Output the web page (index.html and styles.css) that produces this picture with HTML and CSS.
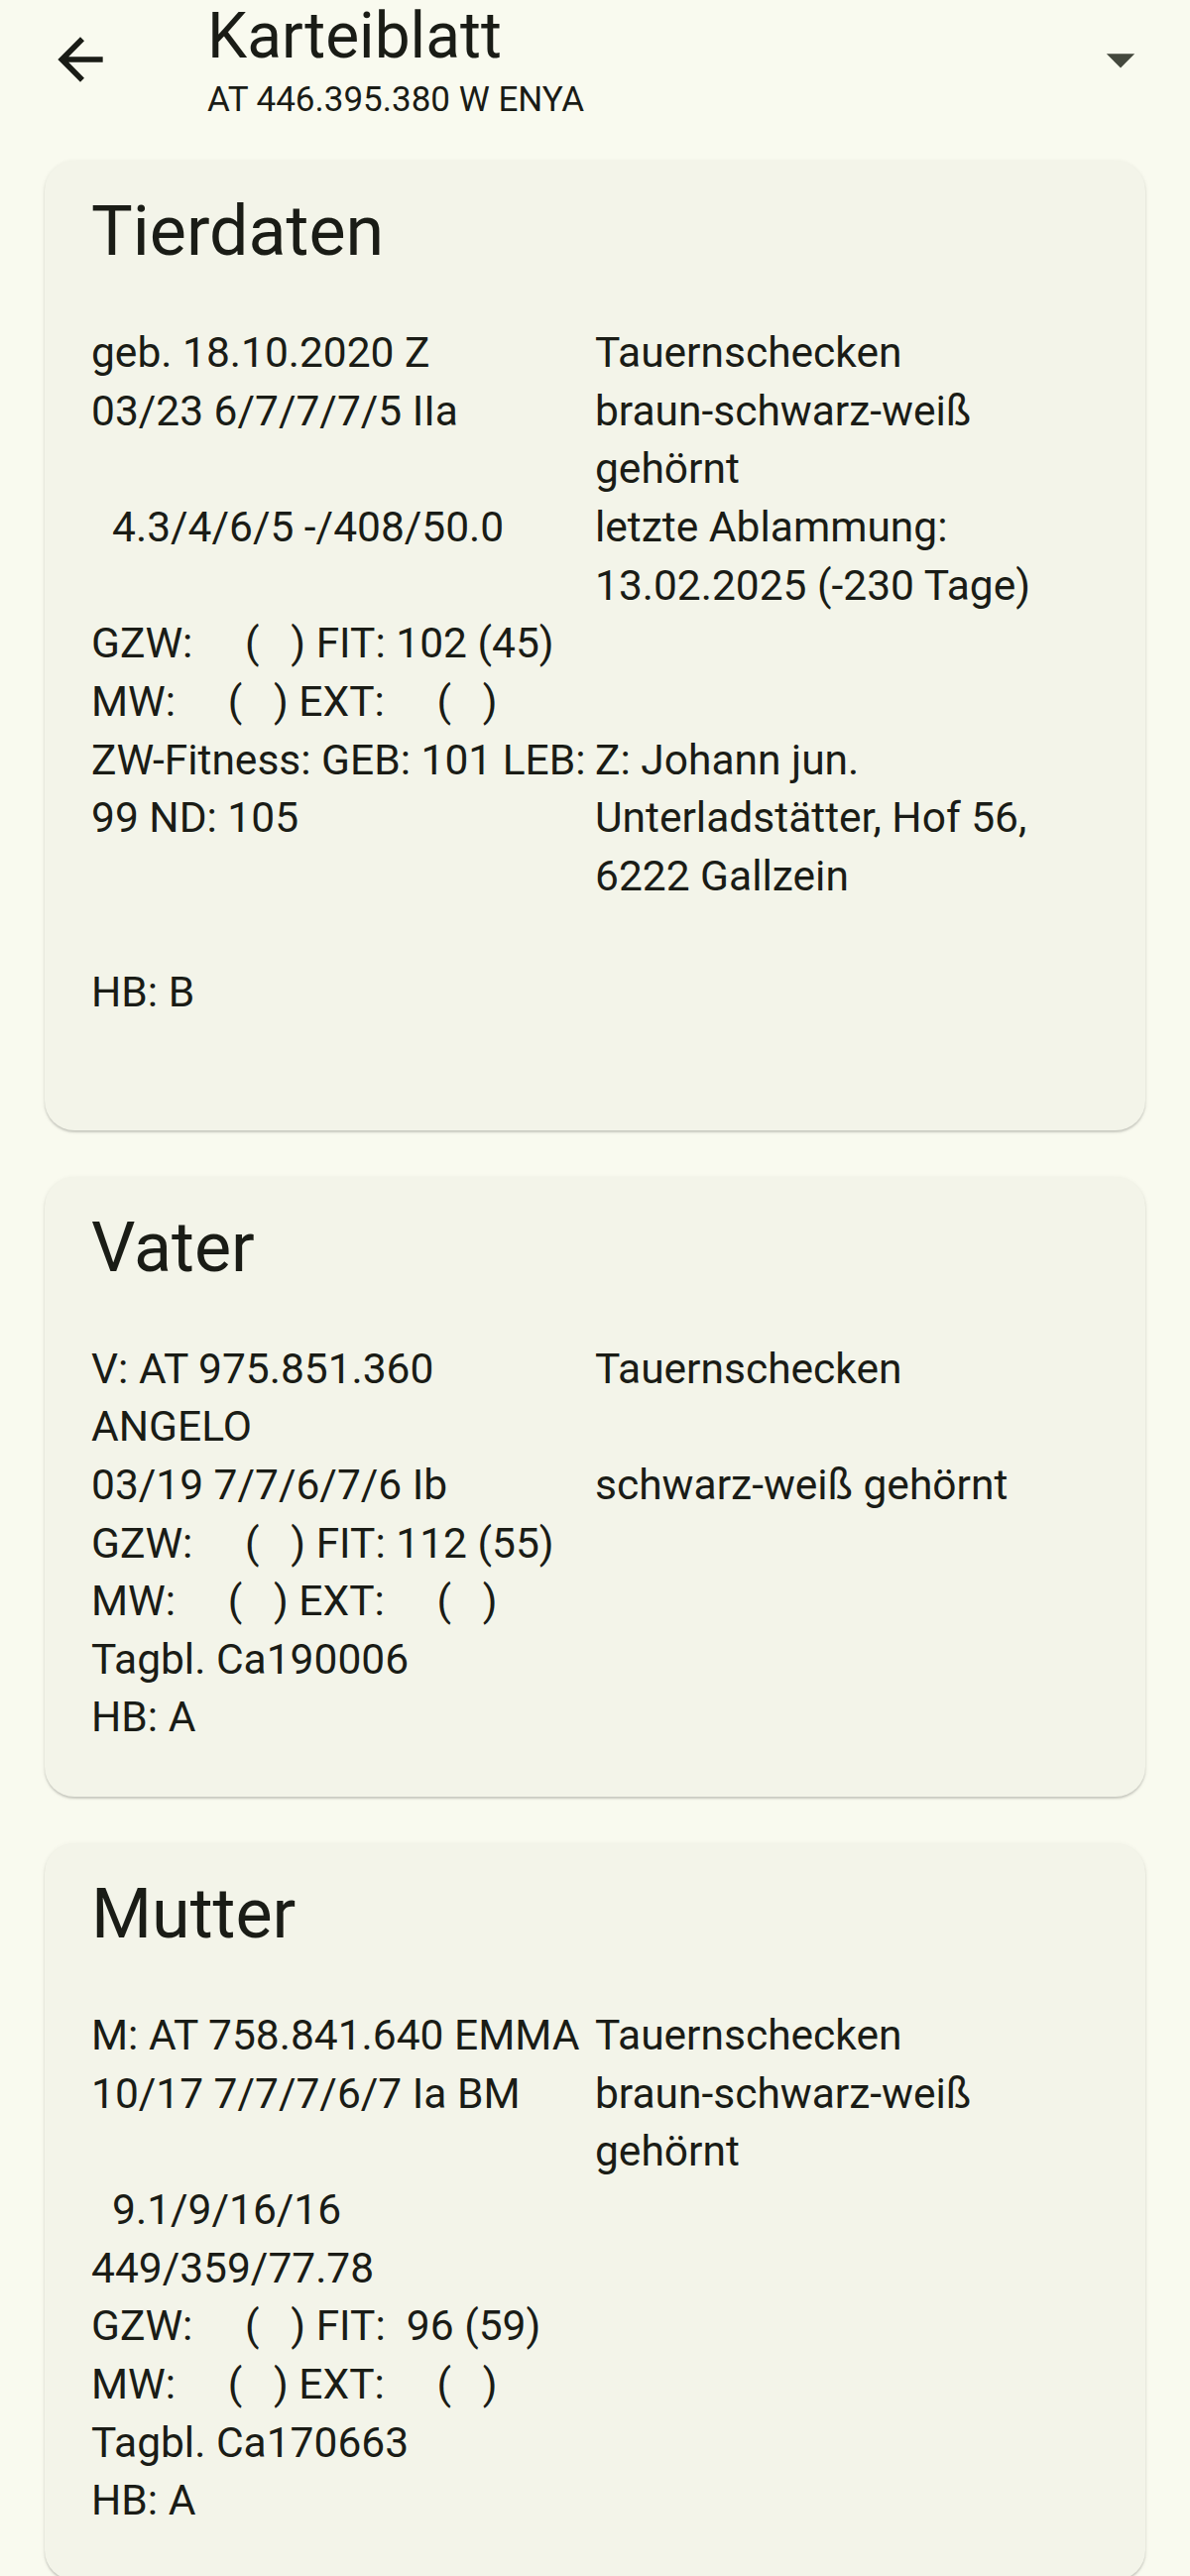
FILE: index.html
```html
<!DOCTYPE html>
<html lang="de">

<head>
    <meta charset="UTF-8">
    <meta name="viewport" content="width=device-width, initial-scale=1.0">
    <title>Karteiblatt</title>
    <link rel="stylesheet" href="styles.css">
</head>

<body>
    <header class="app-bar">
        <button class="icon-btn back" aria-label="Zurück">
            <svg viewBox="0 0 24 24"><path d="M20 11H7.83l5.59-5.59L12 4l-8 8 8 8 1.41-1.41L7.83 13H20v-2z"/></svg>
        </button>
        <div class="app-bar-title">
            <h1>Karteiblatt</h1>
            <p>AT 446.395.380 W ENYA</p>
        </div>
        <button class="icon-btn menu" aria-label="Menü">
            <svg viewBox="0 0 24 24"><path d="M7 10l5 5 5-5z"/></svg>
        </button>
    </header>

    <main class="content">
        <section class="card">
            <h2>Tierdaten</h2>
            <div class="info-grid">
                <div class="cell">geb. 18.10.2020 Z<br>03/23 6/7/7/7/5 IIa</div>
                <div class="cell">Tauernschecken<br>braun-schwarz-weiß<br>gehörnt</div>

                <div class="cell">  4.3/4/6/5 -/408/50.0</div>
                <div class="cell">letzte Ablammung:<br>13.02.2025 (-230 Tage)</div>

                <div class="cell">GZW:     (   ) FIT: 102 (45)<br>MW:     (   ) EXT:     (   )</div>
                <div class="cell"></div>

                <div class="cell">ZW-Fitness: GEB: 101 LEB:<br>99 ND: 105</div>
                <div class="cell">Z: Johann jun.<br>Unterladstätter, Hof 56,<br>6222 Gallzein</div>

                <div class="cell"> <br>HB: B<br> </div>
                <div class="cell"></div>
            </div>
        </section>

        <section class="card">
            <h2>Vater</h2>
            <div class="info-grid">
                <div class="cell">V: AT 975.851.360<br>ANGELO</div>
                <div class="cell">Tauernschecken</div>

                <div class="cell">03/19 7/7/6/7/6 Ib<br>GZW:     (   ) FIT: 112 (55)<br>MW:     (   ) EXT:     (   )<br>Tagbl. Ca190006<br>HB: A</div>
                <div class="cell">schwarz-weiß gehörnt</div>
            </div>
        </section>

        <section class="card">
            <h2>Mutter</h2>
            <div class="info-grid">
                <div class="cell">M: AT 758.841.640 EMMA</div>
                <div class="cell">Tauernschecken</div>

                <div class="cell">10/17 7/7/7/6/7 Ia BM</div>
                <div class="cell">braun-schwarz-weiß<br>gehörnt</div>

                <div class="cell">  9.1/9/16/16<br>449/359/77.78<br>GZW:     (   ) FIT:  96 (59)<br>MW:     (   ) EXT:     (   )<br>Tagbl. Ca170663<br>HB: A</div>
                <div class="cell"></div>
            </div>
        </section>
    </main>
</body>

</html>
```

FILE: styles.css
```css
body {
    margin: 0;
    background-color: #f9faef;
    color: #1a1c16;
    font-family: Roboto, "Liberation Sans", sans-serif;
}

/* top bar */
.app-bar {
    display: flex;
    align-items: flex-start;
    height: 128px;
    margin-bottom: 34px;
}

.icon-btn {
    width: 68px;
    height: 68px;
    margin-top: 26px;
    padding: 0;
    border: none;
    background: none;
}

.icon-btn svg {
    display: block;
    width: 100%;
    height: 100%;
}

.icon-btn.back {
    margin-left: 47px;
    fill: #1a1c16;
}

.icon-btn.menu {
    margin-left: auto;
    margin-right: 36px;
    fill: #44483d;
}

.app-bar-title {
    margin-left: 94px;
}

.app-bar-title h1 {
    margin: 0;
    font-size: 64px;
    font-weight: 400;
    line-height: 74px;
}

.app-bar-title p {
    margin: 0;
    font-size: 35px;
    line-height: 54px;
}

/* cards */
.card {
    margin: 0 45px 47px;
    padding: 27px 50px 50px 47px;
    background-color: #f3f4e9;
    border-radius: 30px;
    box-shadow: 0 2px 2px rgba(0, 0, 0, 0.16), 0 1px 5px rgba(0, 0, 0, 0.07);
}

.card h2 {
    margin: 0 0 50px;
    font-size: 70px;
    font-weight: 400;
    line-height: 88px;
}

.info-grid {
    display: grid;
    grid-template-columns: 508px 1fr;
    font-size: 42.5px;
    line-height: 58.65px;
}

.cell {
    white-space: pre;
}
```
